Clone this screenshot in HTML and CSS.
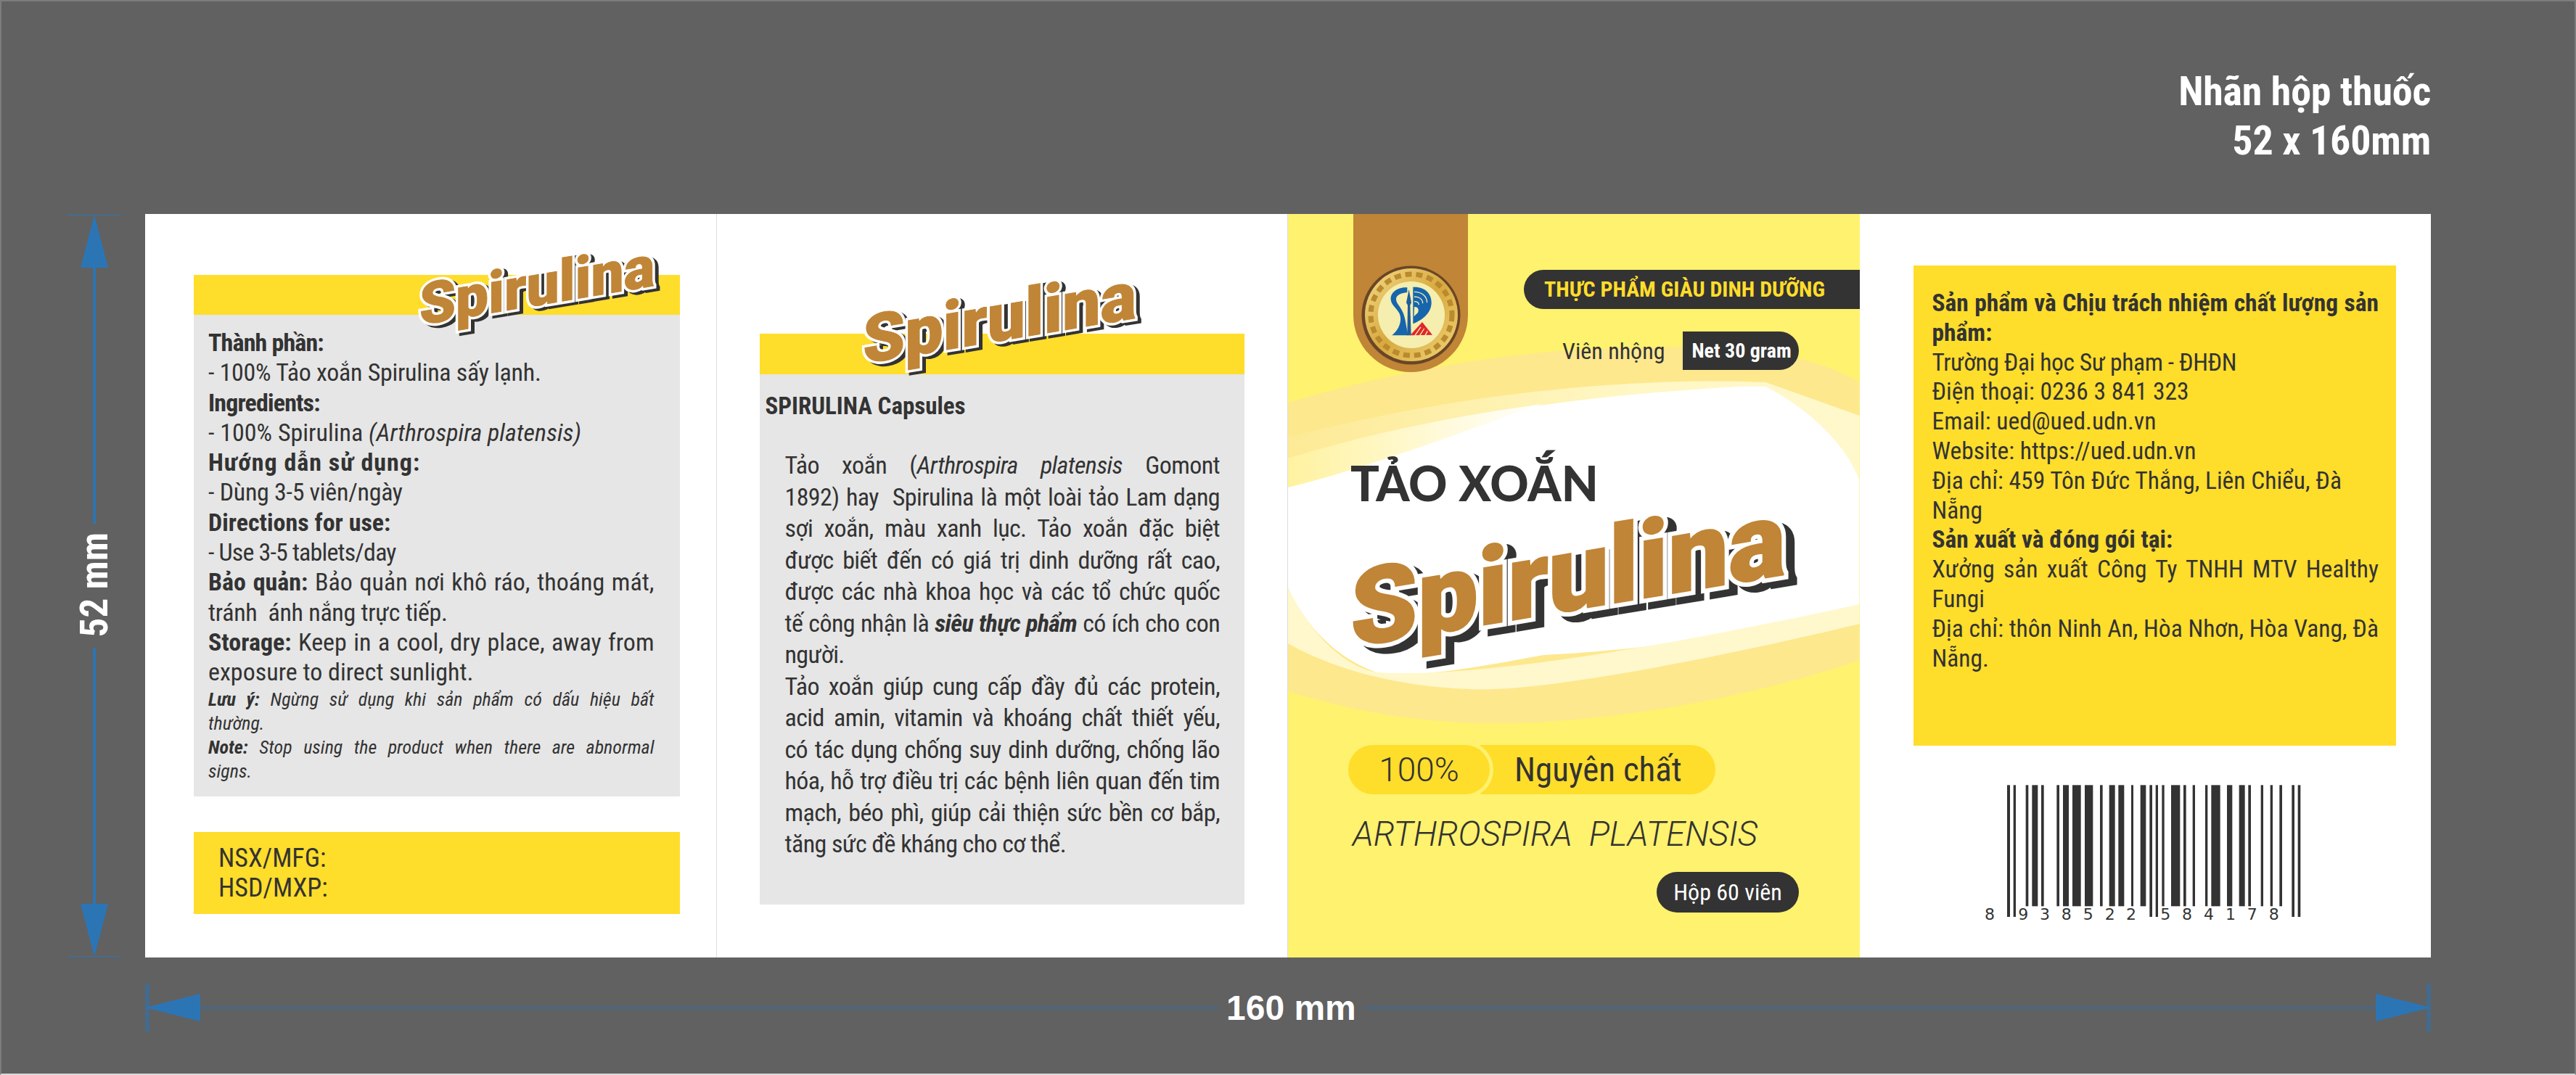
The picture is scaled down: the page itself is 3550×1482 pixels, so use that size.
FILE: index.html
```html
<!DOCTYPE html>
<html lang="vi">
  <head>
    <meta charset="UTF-8" />
    <title>Nhãn hộp thuốc Spirulina</title>
    <link rel="stylesheet" href="styles.css">
  </head>
  <body>
    <div class="sheet">
      <!-- tiêu đề góc phải -->
      <div class="sheet-title">Nhãn hộp thuốc<br>52 x 160mm</div>

      <!-- kích thước dọc -->
      <div class="dim-v">
        <svg class="arrow-v" viewBox="0 0 72 74"><path d="M0 1H72V2H0Z M36 1L55 74H17Z"/></svg>
        <span class="dim-line-v"></span>
        <span class="dim-v-text">52 mm</span>
        <span class="dim-line-v"></span>
        <svg class="arrow-v" viewBox="0 0 72 74"><path d="M0 72H72V73H0Z M36 73L55 0H17Z"/></svg>
      </div>

      <div class="label">
        <!-- mặt 1 -->
        <section class="panel panel-info">
          <div class="band">
            <div class="brand brand-left" data-text="Spirulina">Spirulina</div>
          </div>
          <div class="gray gray-info">
            <div class="row snug"><b>Thành phần:</b></div>
            <div class="row tight">- 100% Tảo xoắn Spirulina sấy lạnh.</div>
            <div class="row snug"><b>Ingredients:</b></div>
            <div class="row">- 100% Spirulina <i>(Arthrospira platensis)</i></div>
            <div class="row loose"><b>Hướng dẫn sử dụng:</b></div>
            <div class="row tight">- Dùng 3-5 viên/ngày</div>
            <div class="row"><b>Directions for use:</b></div>
            <div class="row snug">- Use 3-5 tablets/day</div>
            <div class="row just"><b>Bảo quản:</b> Bảo quản nơi khô ráo, thoáng mát,</div>
            <div class="row tight">tránh  ánh nắng trực tiếp.</div>
            <div class="row just"><b>Storage:</b> Keep in a cool, dry place, away from</div>
            <div class="row">exposure to direct sunlight.</div>
            <div class="note just"><b>Lưu ý:</b> Ngừng sử dụng khi sản phẩm có dấu hiệu bất</div>
            <div class="note">thường.</div>
            <div class="note just"><b>Note:</b> Stop using the product when there are abnormal</div>
            <div class="note">signs.</div>
          </div>
          <div class="dates">
            <div class="row">NSX/MFG:</div>
            <div class="row">HSD/MXP:</div>
          </div>
        </section>

        <!-- mặt 2 -->
        <section class="panel panel-about">
          <div class="band">
            <div class="brand brand-mid" data-text="Spirulina">Spirulina</div>
          </div>
          <div class="gray gray-about">
            <h2 class="about-title">SPIRULINA Capsules</h2>
            <div class="about-body">
              <div class="just">Tảo xoắn (<i>Arthrospira platensis</i> Gomont</div>
              <div class="just">1892) hay  Spirulina là một loài tảo Lam dạng</div>
              <div class="just">sợi xoắn, màu xanh lục. Tảo xoắn đặc biệt</div>
              <div class="just">được biết đến có giá trị dinh dưỡng rất cao,</div>
              <div class="just">được các nhà khoa học và các tổ chức quốc</div>
              <div class="just">tế công nhận là <b><i>siêu thực phẩm</i></b> có ích cho con</div>
              <div>người.</div>
              <div class="just">Tảo xoắn giúp cung cấp đầy đủ các protein,</div>
              <div class="just">acid amin, vitamin và khoáng chất thiết yếu,</div>
              <div class="just">có tác dụng chống suy dinh dưỡng, chống lão</div>
              <div class="just">hóa, hỗ trợ điều trị các bệnh liên quan đến tim</div>
              <div class="just">mạch, béo phì, giúp cải thiện sức bền cơ bắp,</div>
              <div>tăng sức đề kháng cho cơ thể.</div>
            </div>
          </div>
        </section>

        <!-- mặt chính -->
        <section class="panel panel-front">
          <svg class="waves" viewBox="0 0 787 1025" preserveAspectRatio="none">
            <defs>
              <linearGradient id="fadeWhite" x1="0" y1="0" x2="1" y2="0">
                <stop offset="0" stop-color="#fff2a0"/>
                <stop offset="1" stop-color="#ffffff"/>
              </linearGradient>
              <linearGradient id="fadeTop" x1="0" y1="0" x2="1" y2="0">
                <stop offset="0" stop-color="#fdea96"/>
                <stop offset=".6" stop-color="#fff7c4"/>
                <stop offset="1" stop-color="#fff8cc"/>
              </linearGradient>
            </defs>
            <path fill="#fde88e" d="M0 260C130 222 280 192 420 186C560 180 700 180 787 232V615C600 680 350 715 200 698C110 690 40 670 0 658Z"/>
            <path fill="url(#fadeTop)" d="M0 308C150 268 400 222 658 232L787 278V368L0 400Z"/>
            <path fill="#fff" d="M0 337C150 292 350 258 520 245C590 240 630 236 658 238C720 270 770 320 787 368V538C650 580 500 600 352 608C260 625 180 640 122 632C60 610 20 560 0 515Z"/>
            <path fill="url(#fadeWhite)" d="M0 337C110 303 220 280 350 262C240 300 110 350 0 377Z"/>
            <path fill="#fff8cc" d="M0 515C30 580 80 625 122 632C260 640 500 600 787 538V565C600 610 350 660 250 655C130 650 50 620 0 592Z"/>
          </svg>

          <div class="front-top">
            <div class="ribbon">
              <svg class="seal" viewBox="0 0 137 137">
                <defs>
                  <linearGradient id="gold" x1="0" y1="0" x2="1" y2="1">
                    <stop offset="0" stop-color="#f3dc8a"/>
                    <stop offset="0.5" stop-color="#d8a93f"/>
                    <stop offset="1" stop-color="#f0d478"/>
                  </linearGradient>
                </defs>
                <circle cx="68.5" cy="68.5" r="68" fill="#6a4526"/>
                <circle cx="69" cy="68" r="64" fill="url(#gold)"/>
                <circle cx="69" cy="68" r="56" fill="none" stroke="#b98a2e" stroke-width="7" stroke-dasharray="9 6"/>
                <circle cx="69" cy="68" r="46" fill="#f5eeaf"/>
                <g transform="translate(-26 -17) scale(.3333)">
                  <path fill="#1665ad" d="M268 142C228 140 198 162 200 192C202 215 225 228 236 250C248 280 235 315 205 340H272C262 300 262 265 245 235C232 212 222 205 222 190C222 172 245 165 268 162Z"/>
                  <path fill="#1f5d9c" d="M275 150L285 205L280 215L284 340H268L270 215L264 205Z"/>
                  <path fill="#1665ad" d="M297 140C345 140 368 170 368 205C368 245 335 275 292 292V140Z"/>
                  <path fill="none" stroke="#f5eeaf" stroke-width="4" d="M297 160C330 160 350 180 350 205M297 180C318 180 332 190 332 208M297 200C308 200 316 205 316 214"/>
                  <path fill="#f5eeaf" d="M297 222C312 222 318 232 312 246L296 262Z"/>
                  <path fill="#e0262c" d="M280 340L330 285L372 338Z"/>
                  <path fill="none" stroke="#f5eeaf" stroke-width="4" d="M300 340L324 306M320 340L338 312M342 340L352 322"/>
                </g>
              </svg>
            </div>
            <div class="front-tags">
              <div class="rich-tag">THỰC PHẨM GIÀU DINH DƯỠNG</div>
              <div class="capsule-row">
                <span class="capsule-name">Viên nhộng</span>
                <span class="net-tag">Net 30 gram</span>
              </div>
            </div>
          </div>

          <h1 class="front-title">TẢO XOẮN</h1>
          <div class="brand brand-main" data-text="Spirulina">Spirulina</div>

          <div class="pure">
            <span class="pure-pct">100%</span>
            <span class="pure-name">Nguyên chất</span>
          </div>
          <div class="species">ARTHROSPIRA  PLATENSIS</div>
          <div class="box-count">Hộp 60 viên</div>
        </section>

        <!-- mặt 4 -->
        <section class="panel panel-maker">
          <div class="maker">
            <div class="just"><b>Sản phẩm và Chịu trách nhiệm chất lượng sản</b></div>
            <div><b>phẩm:</b></div>
            <div class="tight">Trường Đại học Sư phạm - ĐHĐN</div>
            <div>Điện thoại: 0236 3 841 323</div>
            <div>Email: ued@ued.udn.vn</div>
            <div>Website: https://ued.udn.vn</div>
            <div>Địa chỉ: 459 Tôn Đức Thắng, Liên Chiểu, Đà</div>
            <div>Nẵng</div>
            <div><b>Sản xuất và đóng gói tại:</b></div>
            <div class="just">Xưởng sản xuất Công Ty TNHH MTV Healthy</div>
            <div>Fungi</div>
            <div class="just">Địa chỉ: thôn Ninh An, Hòa Nhơn, Hòa Vang, Đà</div>
            <div>Nẵng.</div>
          </div>
          <svg class="barcode" viewBox="0 0 1560 780">
            <g fill="#333">
              <rect x="195" y="97" width="12" height="545"/><rect x="221" y="97" width="10" height="545"/>
              <rect x="272" y="97" width="11" height="501"/><rect x="298" y="97" width="24" height="501"/>
              <rect x="336" y="97" width="11" height="501"/><rect x="400" y="97" width="11" height="501"/>
              <rect x="426" y="97" width="24" height="501"/><rect x="465" y="97" width="35" height="501"/>
              <rect x="516" y="97" width="34" height="501"/><rect x="579" y="97" width="11" height="501"/>
              <rect x="617" y="97" width="24" height="501"/><rect x="655" y="97" width="24" height="501"/>
              <rect x="708" y="97" width="9" height="501"/><rect x="746" y="97" width="23" height="501"/>
              <rect x="784" y="97" width="11" height="545"/><rect x="809" y="97" width="10" height="545"/>
              <rect x="835" y="97" width="10" height="501"/><rect x="873" y="97" width="37" height="501"/>
              <rect x="924" y="97" width="11" height="501"/><rect x="962" y="97" width="10" height="501"/>
              <rect x="1014" y="97" width="10" height="501"/><rect x="1039" y="97" width="37" height="501"/>
              <rect x="1104" y="97" width="22" height="501"/><rect x="1154" y="97" width="24" height="501"/>
              <rect x="1192" y="97" width="11" height="501"/><rect x="1244" y="97" width="10" height="501"/>
              <rect x="1283" y="97" width="10" height="501"/><rect x="1321" y="97" width="11" height="501"/>
              <rect x="1372" y="97" width="11" height="545"/><rect x="1397" y="97" width="11" height="545"/>
            </g>
            <g class="barcode-digits">
              <text x="123" y="654">8</text><text x="262" y="654">9</text><text x="351" y="654">3</text>
              <text x="440" y="654">8</text><text x="530" y="654">5</text><text x="620" y="654">2</text>
              <text x="708" y="654">2</text><text x="850" y="654">5</text><text x="939" y="654">8</text>
              <text x="1029" y="654">4</text><text x="1119" y="654">1</text><text x="1208" y="654">7</text>
              <text x="1298" y="654">8</text>
            </g>
          </svg>
        </section>
      </div>

      <!-- kích thước ngang -->
      <div class="dim-h">
        <svg class="arrow-h" viewBox="0 0 76 66"><path d="M0 0H6V66H0Z" opacity=".55"/><path d="M0 33L76 14V52Z"/></svg>
        <span class="dim-line-h dim-line-left"></span>
        <span class="dim-h-text">160 mm</span>
        <span class="dim-line-h"></span>
        <svg class="arrow-h" viewBox="0 0 76 66"><path d="M70 0H76V66H70Z" opacity=".55"/><path d="M76 33L0 14V52Z"/></svg>
      </div>
    </div>
  </body>
</html>
```

FILE: styles.css
```css
:root {
  --sheet-gray: #616161;
  --ink: #333333;
  --band-yellow: #ffdd2b;
  --front-yellow: #fff26e;
  --brown: #c08536;
  --panel-gray: #e6e6e6;
  --blue: #2b75b5;
  --cond: "Roboto Condensed", Roboto, sans-serif;
}

html, body {
  margin: 0;
  padding: 0;
}

body {
  background: var(--sheet-gray);
  font-family: var(--cond);
  color: var(--ink);
}

/* --- khung trang --- */
.sheet {
  width: 3550px;
  height: 1482px;
  box-sizing: border-box;
  border: 2px solid #7c7c7c;
  border-bottom-color: #d8d8d8;
  display: grid;
  grid-template-columns: 198px 3150px 198px;
  grid-template-rows: 293px 1025px 160px;
  overflow: hidden;
}

.sheet-title {
  grid-column: 2;
  grid-row: 1;
  justify-self: end;
  margin-top: 90px;
  text-align: right;
  font-size: 56px;
  line-height: 68px;
  font-weight: 700;
  letter-spacing: -0.2px;
  color: #fff;
}

/* --- mũi tên kích thước --- */
.dim-v {
  grid-column: 1;
  grid-row: 2;
  display: flex;
  flex-direction: column;
  align-items: center;
  margin-left: 76px;
  width: 104px;
}

.arrow-v {
  width: 72px;
  height: 74px;
  flex: none;
  fill: var(--blue);
}

.dim-line-v {
  flex: 1;
  width: 4px;
  background: var(--blue);
}

.dim-v-text {
  writing-mode: vertical-rl;
  transform: rotate(180deg);
  color: #fff;
  font-weight: 700;
  font-size: 53px;
  line-height: 40px;
  margin: 12px 0 14px;
}

.dim-h {
  grid-column: 2;
  grid-row: 3;
  display: flex;
  align-items: center;
  height: 66px;
  margin-top: 36px;
}

.arrow-h {
  width: 76px;
  height: 66px;
  flex: none;
  fill: var(--blue);
}

.dim-line-h {
  flex: 1;
  height: 3px;
  background: #47688a;
}

.dim-line-left {
  flex: none;
  width: 1402px;
}

.dim-h-text {
  font-family: "Liberation Sans", Arial, sans-serif;
  font-weight: 700;
  font-size: 48px;
  color: #fff;
  margin: 0 12px;
}

/* --- nhãn --- */
.label {
  grid-column: 2;
  grid-row: 2;
  background: #fff;
  display: grid;
  grid-template-columns: repeat(4, 1fr);
}

.panel {
  position: relative;
  min-width: 0;
}

.panel-info, .panel-about {
  box-sizing: border-box;
  border-right: 1px solid #dcdcdc;
}

.band {
  position: relative;
  background: var(--band-yellow);
  height: 55px;
}

.gray {
  background: var(--panel-gray);
}

.just {
  text-align: justify;
  text-align-last: justify;
}

/* --- mặt 1 --- */
.panel-info {
  padding: 84px 50px 0 67px;
}

.gray-info {
  padding: 18px 35px 13px 20px;
  height: 664px;
  box-sizing: border-box;
}

.row {
  font-size: 34px;
  line-height: 41.3px;
  white-space: pre-wrap;
}

.row.snug {
  letter-spacing: -0.85px;
}

.row.tight {
  letter-spacing: -0.3px;
}

.row.loose {
  letter-spacing: 1px;
}

.note {
  font-size: 26px;
  line-height: 33px;
  font-style: italic;
}

.dates {
  margin-top: 49px;
  height: 113px;
  box-sizing: border-box;
  background: var(--band-yellow);
  padding: 16px 34px;
}

.dates .row {
  font-size: 36px;
}

/* --- mặt 2 --- */
.panel-about {
  padding: 165px 59px 0 59px;
}

.panel-about .band {
  height: 56px;
}

.gray-about {
  height: 731px;
  box-sizing: border-box;
  padding: 24px 34px 0 8px;
}

.about-title {
  margin: 0;
  font-size: 33px;
  line-height: 40px;
  font-weight: 700;
}

.about-body {
  margin: 40px 0 0 27px;
  font-size: 34px;
  line-height: 43.5px;
  letter-spacing: -0.6px;
}

.about-body div {
  white-space: pre-wrap;
}

/* --- chữ Spirulina --- */
.brand {
  position: absolute;
  font-family: Roboto, sans-serif;
  font-weight: 900;
  color: var(--brown);
  white-space: nowrap;
  transform: skewY(-9.5deg);
  -webkit-text-stroke: var(--grow) var(--brown);
  z-index: 2;
}

.brand::before, .brand::after {
  content: attr(data-text);
  position: absolute;
  left: 0;
  top: 0;
  z-index: -1;
}

.brand::before {
  -webkit-text-stroke: var(--edge) #fff;
  color: #fff;
}

.brand::after {
  z-index: -2;
  -webkit-text-stroke: var(--edge) var(--ink);
  color: var(--ink);
  transform: translate(var(--drop-x), var(--drop-y));
  text-shadow: calc(var(--drop-x) * -0.35) calc(var(--drop-y) * -0.35) var(--ink),
    calc(var(--drop-x) * -0.7) calc(var(--drop-y) * -0.7) var(--ink);
}

.brand-left {
  --grow: 1px;
  --edge: 8px;
  --drop-x: 5px;
  --drop-y: 4px;
  font-size: 80px;
  right: 34px;
  top: -32px;
}

.brand-mid {
  --grow: 1px;
  --edge: 8px;
  --drop-x: 5px;
  --drop-y: 4px;
  font-size: 93px;
  left: 142px;
  top: -76px;
}

.brand-main {
  --grow: 2px;
  --edge: 14px;
  --drop-x: 12px;
  --drop-y: 10px;
  font-size: 148px;
  left: 86px;
  top: 410px;
}

/* --- mặt chính --- */
.panel-front {
  background: var(--front-yellow);
  overflow: hidden;
  display: flex;
  flex-direction: column;
}

.waves {
  position: absolute;
  inset: 0;
  width: 100%;
  height: 100%;
}

.front-top {
  position: relative;
  display: flex;
  align-items: flex-start;
}

.ribbon {
  margin-left: 90px;
  width: 158px;
  height: 218px;
  flex: none;
  background: var(--brown);
  border-radius: 0 0 79px 79px;
  display: flex;
  justify-content: center;
  align-items: flex-end;
  padding-bottom: 10px;
  box-sizing: border-box;
}

.seal {
  width: 137px;
  height: 137px;
}

.front-tags {
  flex: 1;
  margin-left: 77px;
  padding-top: 77px;
}

.rich-tag {
  height: 54px;
  line-height: 54px;
  background: var(--ink);
  color: var(--band-yellow);
  font-size: 30px;
  font-weight: 700;
  border-radius: 27px 0 0 27px;
  padding-left: 28px;
  white-space: nowrap;
}

.capsule-row {
  display: flex;
  align-items: center;
  margin: 31px 0 0 53px;
  gap: 25px;
}

.capsule-name {
  font-size: 32px;
}

.net-tag {
  height: 53px;
  line-height: 53px;
  width: 160px;
  box-sizing: border-box;
  padding-left: 12px;
  background: var(--ink);
  color: #fff;
  font-size: 28px;
  font-weight: 700;
  border-radius: 0 27px 27px 0;
  white-space: nowrap;
}

.front-title {
  position: relative;
  margin: 120px 0 0 86px;
  font-family: Lato, sans-serif;
  font-weight: 900;
  font-size: 66px;
  line-height: 66px;
  white-space: nowrap;
}

.pure {
  position: relative;
  display: flex;
  margin: 328px 0 0 83px;
  height: 68px;
}

.pure-pct {
  position: relative;
  z-index: 1;
  width: 195px;
  box-sizing: border-box;
  text-align: center;
  background: var(--band-yellow);
  border-radius: 34px;
  box-shadow: 0 0 0 5px var(--front-yellow);
  font-family: Roboto, sans-serif;
  font-weight: 300;
  font-size: 46px;
  line-height: 68px;
}

.pure-name {
  margin-left: -13px;
  width: 324px;
  box-sizing: border-box;
  padding-left: 47px;
  background: var(--band-yellow);
  border-radius: 0 34px 34px 0;
  font-size: 47px;
  line-height: 68px;
  white-space: nowrap;
}

.species {
  position: relative;
  margin: 27px 0 0 89px;
  font-family: Roboto, sans-serif;
  font-weight: 300;
  font-style: italic;
  font-size: 47.5px;
  line-height: 56px;
  white-space: pre;
}

.box-count {
  position: relative;
  margin: 24px 0 0 508px;
  width: 196px;
  height: 56px;
  line-height: 56px;
  text-align: center;
  background: var(--ink);
  color: #fff;
  border-radius: 28px;
  font-size: 32px;
}

/* --- mặt 4 --- */
.panel-maker {
  padding: 71px 48px 0 74px;
}

.maker {
  height: 662px;
  box-sizing: border-box;
  background: var(--band-yellow);
  padding: 32px 24px 0 26px;
  font-size: 33.5px;
  line-height: 40.8px;
}

.maker .tight {
  letter-spacing: -0.4px;
}

.barcode {
  display: block;
  width: 520px;
  height: 260px;
  margin: 22px 0 0 64px;
}

.barcode-digits {
  font-family: "DejaVu Sans", sans-serif;
  font-size: 66px;
  fill: #333;
  text-anchor: middle;
}
```
